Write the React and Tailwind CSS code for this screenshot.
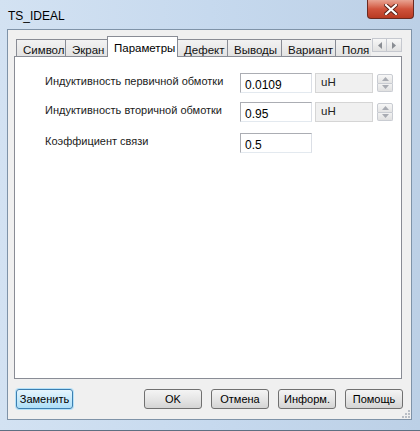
import React from "react";

const tabs = ["Символ", "Экран", "Параметры", "Дефект", "Выводы", "Вариант", "Поля"];

const Spinner = () => (
  <div className="flex flex-col ml-[4px] w-[16px] h-[18px] mt-[1px]">
    <div className="flex-1 flex items-center justify-center border border-[#c9ccd2] bg-gradient-to-b from-[#f7f7f7] to-[#e4e4e4] rounded-t-[2px]">
      <svg width="7" height="4" viewBox="0 0 7 4"><path d="M3.5 0 L7 4 L0 4 Z" fill="#a8abb2" /></svg>
    </div>
    <div className="flex-1 flex items-center justify-center border border-t-0 border-[#c9ccd2] bg-gradient-to-b from-[#f2f2f2] to-[#e0e0e0] rounded-b-[2px]">
      <svg width="7" height="4" viewBox="0 0 7 4"><path d="M0 0 L7 0 L3.5 4 Z" fill="#a8abb2" /></svg>
    </div>
  </div>
);

const Field = ({ label, value, unit }) => (
  <div className="flex items-center h-[20px]">
    <div className="w-[195px] text-[11px] text-[#1b1b1b] -mt-[4px]">{label}</div>
    <div className="w-[72px] h-[20px] border border-[#abadb3] border-r-[#dbdfe6] border-b-[#e3e9ef] bg-white flex items-center pl-[4px] pt-[3px] text-[12px] text-black">
      {value}
    </div>
    {unit && (
      <div className="flex items-start ml-[3px]">
        <div className="w-[58px] h-[20px] border border-[#d5d5d5] bg-[#f0f0f0] pl-[5px] text-[11.5px] text-[#222] leading-[17px]">
          {unit}
        </div>
        <Spinner />
      </div>
    )}
  </div>
);

const Button = ({ children, primary }) => (
  <button
    className={
      primary
        ? "w-[57px] h-[20px] rounded-[3px] border border-[#3c7fb1] bg-gradient-to-b from-[#e5f5fd] to-[#aedff7] text-[11px] text-black shadow-[0_0_0_1px_#b7e2f8]"
        : "w-[58px] h-[20px] rounded-[3px] border border-[#707070] bg-gradient-to-b from-[#f4f4f4] via-[#e6e6e6] to-[#d4d4d4] text-[11px] text-black"
    }
  >
    {children}
  </button>
);

export default function App() {
  return (
    <div
      className="w-[420px] h-[431px] flex flex-col bg-gradient-to-r from-[#d3e2f2] via-[#c6d9ee] to-[#bcd0e6] border-b border-[#5e6f82]"
      style={{ fontFamily: '"Liberation Sans", Arial, sans-serif' }}
    >
      <div className="h-[29px] flex justify-between">
        <div className="pl-[8px] pt-[7px] text-[12px] text-black">TS_IDEAL</div>
        <div className="mr-[6px] w-[47px] h-[19px] rounded-b-[4px] border border-t-0 border-[#6a2a20] bg-gradient-to-b from-[#e8a392] via-[#d0533c] to-[#b83a22] flex items-center justify-center">
          <svg width="14" height="11" viewBox="0 0 14 11">
            <path d="M2 1 L12 10 M12 1 L2 10" stroke="#5a1f15" strokeWidth="4" strokeLinecap="square" />
            <path d="M2 1 L12 10 M12 1 L2 10" stroke="#ffffff" strokeWidth="2.2" strokeLinecap="square" />
          </svg>
        </div>
      </div>

      <div className="ml-[7px] mr-[8px] mb-[10px] flex-1 border border-[#7f93a8] bg-[#f0f0f0] flex flex-col relative">
        <div className="ml-[6px] mt-[6px] w-[388px]">
          <div className="flex items-end h-[20px] pl-[2px] relative z-10">
            {tabs.map((t, i) =>
              t === "Параметры" ? (
                <div
                  key={t}
                  className="h-[21px] w-[71px] -mb-px -ml-px border border-b-0 border-[#898c95] bg-white text-[11.5px] text-black pl-[6px] pt-[3px]"
                >
                  {t}
                </div>
              ) : (
                <div
                  key={t}
                  className={
                    "h-[17px] border border-[#898c95] border-b-0 bg-gradient-to-b from-[#f2f2f2] to-[#e3e3e3] text-[11.5px] text-[#111] pl-[6px] pt-[2px] -ml-px first:ml-0 " +
                    (i === 0
                      ? "w-[50px]"
                      : i === 1
                      ? "w-[43px]"
                      : i === 3
                      ? "w-[51px]"
                      : i === 4
                      ? "w-[55px]"
                      : i === 5
                      ? "w-[55px]"
                      : "w-[36px] overflow-hidden whitespace-nowrap border-r-0")
                  }
                >
                  {t}
                </div>
              )
            )}
            <div className="flex self-center ml-[1px] -mt-[2px]">
              <div className="w-[15px] h-[14px] border border-[#c5c8cf] bg-gradient-to-b from-[#f7f7f7] to-[#e2e2e2] flex items-center justify-center">
                <svg width="4" height="7" viewBox="0 0 4 7"><path d="M4 0 L0 3.5 L4 7 Z" fill="#8a8d93" /></svg>
              </div>
              <div className="w-[15px] h-[14px] border border-l-0 border-[#c5c8cf] bg-gradient-to-b from-[#f7f7f7] to-[#e2e2e2] flex items-center justify-center">
                <svg width="4" height="7" viewBox="0 0 4 7"><path d="M0 0 L4 3.5 L0 7 Z" fill="#8a8d93" /></svg>
              </div>
            </div>
          </div>
          <div className="h-[323px] border border-[#898c95] bg-white pl-[30px] pt-[16px] flex flex-col gap-[9px]">
            <Field label="Индуктивность первичной обмотки" value="0.0109" unit="uH" />
            <Field label="Индуктивность вторичной обмотки" value="0.95" unit="uH" />
            <div className="mt-[2px]">
              <Field label="Коэффициент связи" value="0.5" />
            </div>
          </div>
        </div>

        <div className="flex items-center mt-[10px] ml-[8px] mr-[8px]">
          <Button primary>Заменить</Button>
          <div className="flex-1" />
          <div className="flex gap-[9px]">
            <Button>OK</Button>
            <Button>Отмена</Button>
            <Button>Информ.</Button>
            <Button>Помощь</Button>
          </div>
        </div>

        <div className="absolute right-[1px] bottom-[1px] grid grid-cols-3 gap-[1px] w-[8px] h-[8px]">
          <span />
          <span />
          <span className="w-[2px] h-[2px] bg-[#b9bec6]" />
          <span />
          <span className="w-[2px] h-[2px] bg-[#b9bec6]" />
          <span className="w-[2px] h-[2px] bg-[#b9bec6]" />
          <span className="w-[2px] h-[2px] bg-[#b9bec6]" />
          <span className="w-[2px] h-[2px] bg-[#b9bec6]" />
          <span className="w-[2px] h-[2px] bg-[#b9bec6]" />
        </div>
      </div>
    </div>
  );
}
